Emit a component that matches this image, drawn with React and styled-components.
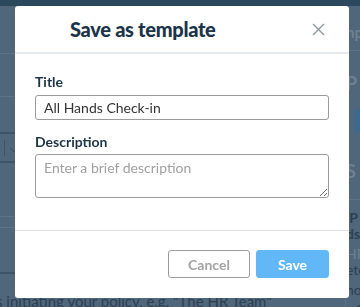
import React from "react";
import styled, { createGlobalStyle } from "styled-components";

const Global = createGlobalStyle`
  html, body { margin: 0; padding: 0; }
  body {
    background: #50667a;
    font-family: Lato, "Noto Sans", sans-serif;
    width: 360px;
    height: 307px;
    overflow: hidden;
  }
`;

const Page = styled.div`
  width: 360px;
  height: 307px;
  display: flex;
  flex-direction: column;
  overflow: hidden;
`;

const TopBar = styled.div`
  height: 6px;
  background: #2c485d;
  flex-shrink: 0;
`;

const Body = styled.div`
  flex: 1;
  display: flex;
  min-height: 0;
`;

const Main = styled.div`
  flex: 1;
  display: flex;
  flex-direction: column;
  overflow: hidden;
`;

const Row = styled.div`
  height: ${(p) => p.h}px;
  border-bottom: ${(p) => (p.dark ? "2px solid #3e5466" : "1px solid #5d7284")};
  box-sizing: border-box;
  display: flex;
  align-items: center;
  padding-left: 4px;
  flex-shrink: 0;
`;

const Divider = styled.div`
  width: 1px;
  height: 16px;
  background: #3e5466;
`;

const Chevron = styled.span`
  margin-left: 6px;
  width: 5px;
  height: 5px;
  border-right: 1px solid #3e5466;
  border-bottom: 1px solid #3e5466;
  transform: rotate(45deg);
`;

const BottomText = styled.div`
  margin-left: -4px;
  margin-top: 18px;
  font-size: 15px;
  line-height: 18px;
  color: #2c4052;
  white-space: nowrap;
  flex-shrink: 0;
`;

const Side = styled.div`
  width: 14px;
  display: flex;
  flex-direction: column;
  border-left: 1px solid #5d7284;
  overflow: hidden;
`;

const SideText = styled.div`
  margin-top: ${(p) => p.mt}px;
  margin-left: ${(p) => p.ml || 0}px;
  font-size: ${(p) => p.size || 14}px;
  font-weight: ${(p) => (p.bold ? 700 : 400)};
  color: ${(p) => p.color || "#2c4052"};
  white-space: nowrap;
  line-height: 16px;
  flex-shrink: 0;
`;

const SideLine = styled.div`
  margin-top: ${(p) => p.mt}px;
  height: 1px;
  background: #5d7284;
  flex-shrink: 0;
`;

const BlueBar = styled.div`
  margin-top: ${(p) => p.mt}px;
  margin-left: 8px;
  height: 24px;
  background: #3c6a8e;
  border-radius: 3px 0 0 3px;
  flex-shrink: 0;
`;

const Modal = styled.div`
  position: fixed;
  left: 15px;
  top: 6px;
  width: 334px;
  height: 292px;
  background: #fff;
  border-radius: 3px;
  display: flex;
  flex-direction: column;
  box-sizing: border-box;
`;

const Header = styled.div`
  height: 48px;
  border-bottom: 2px solid #e5eaef;
  display: flex;
  align-items: center;
  justify-content: space-between;
  padding: 0 24px 0 55px;
  box-sizing: border-box;
  flex-shrink: 0;
`;

const Title = styled.h2`
  margin: 0;
  font-size: 20px;
  font-weight: 900;
  color: #1b3449;
  letter-spacing: -0.3px;
`;

const CloseButton = styled.button`
  border: 0;
  background: none;
  padding: 0;
  width: 13px;
  height: 13px;
  display: flex;
  cursor: pointer;
`;

const Form = styled.div`
  padding: 19px 20px 0 20px;
  display: flex;
  flex-direction: column;
  height: 177px;
  box-sizing: border-box;
  border-bottom: 1px solid #dcdfe2;
  flex-shrink: 0;
`;

const Label = styled.label`
  font-size: 14px;
  font-weight: 700;
  color: #1b3449;
  line-height: 18px;
  margin-top: ${(p) => p.mt || 0}px;
`;

const Input = styled.input`
  margin-top: 4px;
  height: 25px;
  box-sizing: border-box;
  border: 1px solid #9b9b9b;
  border-radius: 3px;
  padding: 0 8px;
  font-family: Lato, "Noto Sans", sans-serif;
  font-size: 14px;
  color: #333;
  outline: none;
`;

const TextArea = styled.textarea`
  margin-top: 3px;
  height: 44px;
  box-sizing: border-box;
  border: 1px solid #9b9b9b;
  border-radius: 3px;
  padding: 4px 8px;
  font-family: Lato, "Noto Sans", sans-serif;
  font-size: 14px;
  color: #333;
  outline: none;
  resize: vertical;
  &::placeholder { color: #a0a0a0; }
`;

const Footer = styled.div`
  display: flex;
  justify-content: flex-end;
  gap: 6px;
  padding: 19px 20px 0 0;
`;

const Button = styled.button`
  height: 28px;
  width: ${(p) => p.w}px;
  box-sizing: border-box;
  border-radius: 3px;
  font-family: Lato, "Noto Sans", sans-serif;
  font-size: 14px;
  font-weight: 700;
  cursor: pointer;
  border: 1px solid ${(p) => (p.primary ? "#62b8f6" : "#9b9b9b")};
  background: ${(p) => (p.primary ? "#62b8f6" : "#fff")};
  color: ${(p) => (p.primary ? "#fff" : "#a3a3a3")};
`;

export default function App() {
  return (
    <>
      <Global />
      <Page>
        <TopBar />
        <Body>
          <Main>
            <Row h={48} />
            <Row h={43} />
            <Row h={37} dark />
            <Row h={29} dark>
              <Divider />
              <Chevron />
            </Row>
            <Row h={54} />
            <Row h={11} />
            <Row h={46} dark />
            <BottomText>s initiating your policy, e.g. "The HR Team"</BottomText>
          </Main>
          <Side>
            <SideText mt={18} size={15} bold color="#6f8190">np</SideText>
            <SideLine mt={10} />
            <SideText mt={24} size={18} bold color="#6f8190">P</SideText>
            <BlueBar mt={18} />
            <SideText mt={30} size={18} bold color="#6f8190">S</SideText>
            <SideLine mt={20} />
            <SideText mt={10} bold>.P</SideText>
            <SideText mt={0} bold>ds</SideText>
            <SideText mt={4} color="#6f8190">HR</SideText>
            <SideText mt={0} color="#2c4052">ete</SideText>
            <SideText mt={4} color="#2c4052">no</SideText>
            <SideText mt={4} ml={-40} color="#2c4052">Sep 21, 9</SideText>
          </Side>
        </Body>
      </Page>
      <Modal>
        <Header>
          <Title>Save as template</Title>
          <CloseButton aria-label="Close">
            <svg width="13" height="13" viewBox="0 0 13 13">
              <path d="M1 1L12 12M12 1L1 12" stroke="#8c98a2" strokeWidth="1.4" fill="none" />
            </svg>
          </CloseButton>
        </Header>
        <Form>
          <Label>Title</Label>
          <Input defaultValue="All Hands Check-in" />
          <Label mt={13}>Description</Label>
          <TextArea placeholder="Enter a brief description" />
        </Form>
        <Footer>
          <Button w={82}>Cancel</Button>
          <Button w={73} primary>Save</Button>
        </Footer>
      </Modal>
    </>
  );
}
